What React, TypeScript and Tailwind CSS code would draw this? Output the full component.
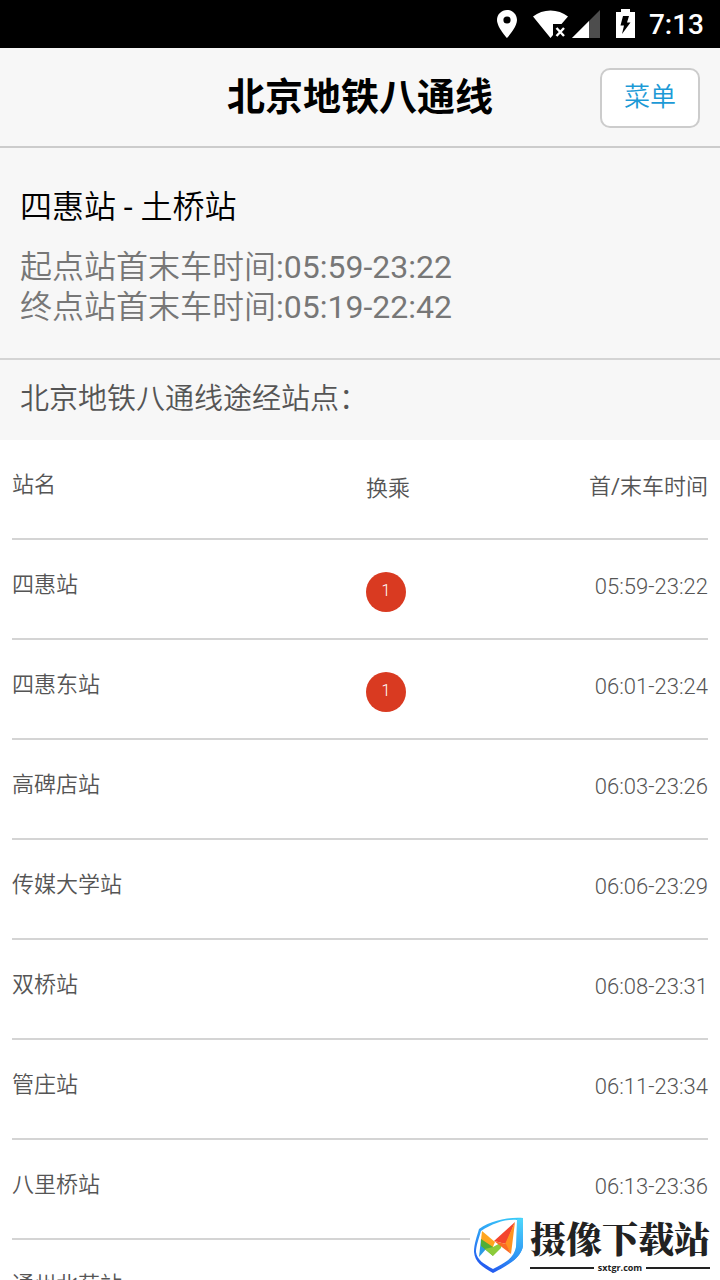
interface Station {
  name: string
  transfer?: number
  time?: string
}

const stations: Station[] = [
  { name: '四惠站', transfer: 1, time: '05:59-23:22' },
  { name: '四惠东站', transfer: 1, time: '06:01-23:24' },
  { name: '高碑店站', time: '06:03-23:26' },
  { name: '传媒大学站', time: '06:06-23:29' },
  { name: '双桥站', time: '06:08-23:31' },
  { name: '管庄站', time: '06:11-23:34' },
  { name: '八里桥站', time: '06:13-23:36' },
  { name: '通州北苑站' },
]

function StatusBar() {
  return (
    <div className="flex h-12 shrink-0 items-center justify-end bg-black pr-4 text-white">
      <svg className="mr-4 h-8 w-5" viewBox="0 0 20 32" fill="#fff" aria-hidden="true">
        <path fillRule="evenodd" d="M10 2C4.500 2 0 6.400 0 12c0 7.300 10 18 10 18s10-10.700 10-18C20 6.400 15.500 2 10 2zm0 6.400a3.600 3.600 0 1 1 0 7.200 3.600 3.600 0 0 1 0-7.200z" />
      </svg>
      <svg className="mr-1 h-8 w-[35px]" viewBox="0 0 35 32" fill="#fff" aria-hidden="true">
        <path d="M0 8.500C5 4.400 11 2.400 17.500 2.400S30 4.400 35 8.500L28.500 16H20v11l-2.500 3z" />
        <path d="M23.500 20l7.500 8M31 20l-7.500 8" stroke="#fff" strokeWidth="2.400" fill="none" />
      </svg>
      <svg className="mr-4 h-8 w-7" viewBox="0 0 28 32" aria-hidden="true">
        <path d="M28 2v28H0z" fill="#4d4d4d" />
        <path d="M17 13v17H0z" fill="#fff" />
      </svg>
      <svg className="mr-3.5 h-8 w-[19px]" viewBox="0 0 19 32" aria-hidden="true">
        <path d="M5 1h9v3h5v26H0V4h5z" fill="#fff" />
        <path d="M7 8h6l-2 6.500h3.500L6 26l2-8.500H4.500z" fill="#000" />
      </svg>
      <span className="pt-0.5 text-[28px] font-medium leading-8">7:13</span>
    </div>
  )
}

function Watermark() {
  return (
    <div className="fixed bottom-0 right-0 flex h-[70px] items-center bg-white pl-1 pr-2.5">
      <svg className="mr-1.5 h-[58px] w-[50px]" viewBox="0 0 50 58" aria-hidden="true">
        <defs>
          <linearGradient id="shield" x1="0.8" y1="0" x2="0.3" y2="1">
            <stop offset="0" stopColor="#38c8f8" />
            <stop offset="0.500" stopColor="#2f9df5" />
            <stop offset="1" stopColor="#2355f0" />
          </linearGradient>
          <linearGradient id="rim" x1="0" y1="0" x2="0" y2="1">
            <stop offset="0" stopColor="#4fd8fb" />
            <stop offset="1" stopColor="#2a8df3" />
          </linearGradient>
        </defs>
        <path fillRule="evenodd" fill="url(#shield)" d="M49 2v28c-2 12-16 20-30 27C8 51 1 46 0 36 0 28 3 20 5 13 17 5 32 1 49 2zM43 4C30 3 18 8 7 15 5 22 2 30 2 36c1 8 8 12 17 17 12-6 21-11 23-22z" />
        <path d="M43 3l6-1v28c-1 6-5 11-10 15 3-5 3-9 4-14z" fill="url(#rim)" />
        <path d="M7 23l6 9-8 9z" fill="#2b9be6" />
        <path d="M8 15l13 11-3 7L7 24z" fill="#ffa51f" />
        <path d="M7 23l12 8v9L7 30z" fill="#4fae38" />
        <path d="M19 31l9-5-1 6-8 8-8-7z" fill="#8ccb3a" />
        <path d="M41 6L20 25l12 3z" fill="#f4452d" />
        <path d="M41 6L31 28l6 10z" fill="#ff921f" />
        <path d="M20 25l12 3 5 10z" fill="#fb6a24" />
      </svg>
      <div className="text-[#222]">
        <div className="font-[Noto_Serif_CJK_SC,Noto_Sans_CJK_SC,serif] text-4xl font-black leading-[44px]">摄像下载站</div>
        <div className="mt-0.5 flex items-center gap-1 font-[Open_Sans,sans-serif] text-[9px] font-bold leading-3">
          <span className="h-0.5 flex-1 bg-[#222]" />
          sxtgr.com
          <span className="h-0.5 flex-1 bg-[#222]" />
        </div>
      </div>
    </div>
  )
}

export default function App() {
  return (
    <div className="flex h-screen flex-col overflow-hidden bg-white font-[Roboto,Noto_Sans_CJK_SC,sans-serif]">
      <StatusBar />

      <header className="grid h-[100px] shrink-0 grid-cols-[1fr_auto_1fr] items-center border-b-2 border-[#ccc] bg-[#f7f7f7] px-5 pt-0.5">
        <h1 className="col-start-2 pb-0.5 text-[38px] font-bold leading-[48px] text-black">北京地铁八通线</h1>
        <button className="h-15 w-25 justify-self-end rounded-[10px] border-2 border-[#ccc] bg-white pb-0.5 text-[26px] font-[350] text-[#1c9ad6]">
          菜单
        </button>
      </header>

      <main className="min-h-0 flex-1 overflow-y-auto [scrollbar-width:none]">
        <section className="border-b-2 border-[#d4d4d4] bg-[#f7f7f7] px-5 pb-[31px] pt-[39px] text-[32px] font-[350] leading-10">
          <h2 className="mb-5 text-black">四惠站 <span className="font-normal">-</span> 土桥站</h2>
          <p className="text-[#777]">起点站首末车时间<span className="font-normal">:05:59-23:22</span></p>
          <p className="text-[#777]">终点站首末车时间<span className="font-normal">:05:19-22:42</span></p>
        </section>

        <h3 className="h-20 bg-[#f7f7f7] px-5 pt-[17px] text-[29px] font-[350] leading-[44px] text-[#555]">
          北京地铁八通线途经站点：
        </h3>

        {/* Station list */}
        <div className="px-3">
          <table className="w-full table-fixed border-separate border-spacing-0 text-[22px] leading-8 text-[#555]">
            <colgroup>
              <col className="w-1/2" />
              <col className="w-1/5" />
              <col className="w-3/10" />
            </colgroup>
            <thead>
              <tr className="h-25 align-top">
                <th className="border-b-2 border-[#d4d4d4] pt-[29px] text-left font-[350]">站名</th>
                <th className="border-b-2 border-[#d4d4d4] pl-1.5 pt-[33px] text-left font-[350]">换乘</th>
                <th className="border-b-2 border-[#d4d4d4] pt-[31px] text-right font-[350]">
                  首<span className="font-normal">/</span>末车时间
                </th>
              </tr>
            </thead>
            <tbody>
              {stations.map((station) => (
                <tr key={station.name} className="h-25 align-top">
                  <td className="border-b-2 border-[#d4d4d4] pt-[29px] font-[350]">{station.name}</td>
                  <td className="border-b-2 border-[#d4d4d4] pl-1.5 pt-8">
                    {station.transfer && (
                      <span className="block size-10 rounded-full bg-[#d93a21] text-center text-base font-light leading-[38px] text-white">
                        {station.transfer}
                      </span>
                    )}
                  </td>
                  <td className="border-b-2 border-[#d4d4d4] pt-[31px] text-right font-light">{station.time}</td>
                </tr>
              ))}
            </tbody>
          </table>
        </div>
      </main>

      <Watermark />
    </div>
  )
}
